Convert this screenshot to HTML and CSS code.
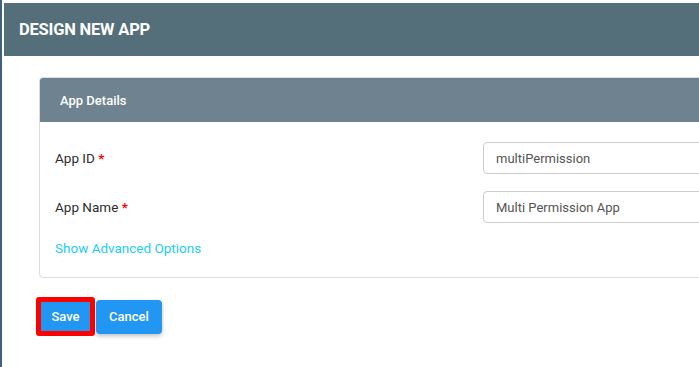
FILE: index.html
```html
<html lang="en">
<head>
  <meta charset="UTF-8">
  <meta name="viewport" content="width=device-width, initial-scale=1.0">
  <title>Design New App</title>
  <link rel="stylesheet" href="styles.css">
</head>
<body>
  <div class="page">
    <!-- Page header -->
    <div class="page-header">
      <h1>DESIGN NEW APP</h1>
    </div>
    <div class="content">
      <div class="card">
        <div class="card-header">App Details</div>
        <div class="card-body">
          <div class="form-row">
            <label>App ID <span class="req">*</span></label>
            <input type="text" value="multiPermission">
          </div>
          <div class="form-row">
            <label>App Name <span class="req">*</span></label>
            <input type="text" value="Multi Permission App">
          </div>
          <a class="advanced-link" href="#">Show Advanced Options</a>
        </div>
      </div>
      <div class="actions">
        <button class="btn btn-save">Save</button>
        <button class="btn btn-cancel">Cancel</button>
      </div>
    </div>
  </div>
</body>
</html>
```

FILE: styles.css
```css
* {
  margin: 0;
  padding: 0;
  box-sizing: border-box;
  font-family: 'Roboto', 'Liberation Sans', sans-serif;
}
body {
  background: #fff;
  overflow: hidden;
  height: 367px;
}
.page {
  border-left: 2px solid #40607f;
  padding: 3px 0 0 2px;
  height: 100%;
  width: 1100px;
}
.page-header {
  background-color: #546e7a;
  height: 53px;
  display: flex;
  align-items: center;
  padding-left: 15px;
}
.page-header h1 {
  color: #fff;
  font-size: 16.5px;
  font-weight: 700;
  letter-spacing: -0.2px;
}
.content {
  padding: 21px 0 0 35px;
}
.card {
  width: 900px;
  border: 1px solid #dcdcdc;
  border-radius: 4px;
  overflow: hidden;
}
.card-header {
  background-color: #6e838f;
  color: #fff;
  height: 44px;
  display: flex;
  align-items: center;
  padding-left: 20px;
  font-size: 13px;
  font-weight: 500;
}
.card-body {
  padding: 20px 0 21px 15px;
}
.form-row {
  display: grid;
  grid-template-columns: 428px 1fr;
  align-items: center;
  margin-bottom: 17px;
}
.form-row label {
  font-size: 13.5px;
  font-weight: 400;
  color: #2e2e2e;
}
.req {
  color: #f00;
  font-weight: 700;
}
.form-row input {
  height: 32px;
  border: 1px solid #ccc;
  border-radius: 4px;
  padding: 0 12px;
  font-size: 13px;
  color: #555;
}
.advanced-link {
  display: block;
  margin-top: 4px;
  color: #22cdf5;
  font-size: 13.5px;
  font-weight: 400;
  text-decoration: none;
}
.actions {
  display: flex;
  align-items: center;
  gap: 1px;
  margin-top: 19px;
  margin-left: -3px;
}
.btn {
  background-color: #2196f3;
  color: #fff;
  border: none;
  font-size: 13px;
  font-weight: 500;
  cursor: pointer;
}
.btn-save {
  width: 59px;
  height: 39px;
  border: 5px solid #f00;
  border-radius: 3px;
}
.btn-cancel {
  width: 66px;
  height: 34px;
  border-radius: 4px;
  box-shadow: 0 2px 4px rgba(0, 0, 0, 0.25);
}
```
